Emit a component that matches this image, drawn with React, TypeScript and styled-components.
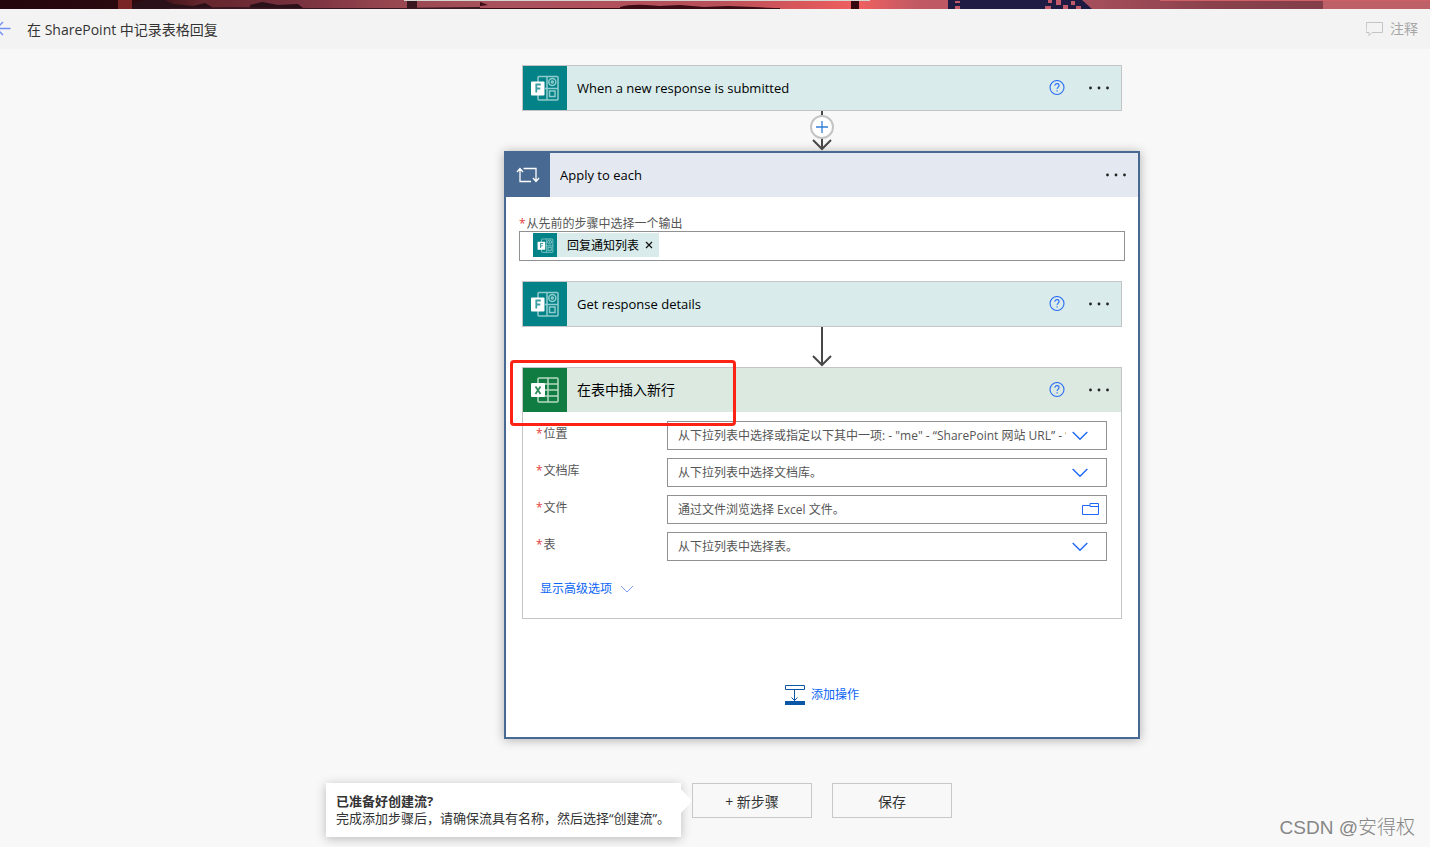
import React from "react";
import styled, { createGlobalStyle } from "styled-components";

const GlobalStyle = createGlobalStyle`
  * { box-sizing: border-box; }
  html, body { margin: 0; background: #f8f8f8; }
  body, button, input, select {
    font-family: "Open Sans", "Noto Sans CJK SC", sans-serif;
    font-size: 14px;
    color: #333;
  }
  button { margin: 0; padding: 0; border: 0; background: none; cursor: pointer; }
  svg { display: block; flex: none; }
`;

const Page = styled.div`
  position: relative;
  min-height: 100vh;
  overflow: hidden;
`;

const Banner = styled.svg`
  width: 100%;
  height: 9px;
`;

const TopBar = styled.header`
  display: flex;
  align-items: center;
  justify-content: space-between;
  height: 40px;
  padding-right: 12px;
  background: #f3f3f3;
`;

const TitleGroup = styled.div`
  display: flex;
  align-items: center;
  gap: 16px;
`;

const FlowTitle = styled.h1`
  margin: 0;
  padding-top: 2px;
  font-size: 14px;
  font-weight: 400;
  line-height: 20px;
`;

const CommentButton = styled.button`
  display: flex;
  align-items: center;
  gap: 7px;
  color: #a6a6a6;
  line-height: 20px;
`;

const Canvas = styled.main`
  display: flex;
  flex-direction: column;
  align-items: center;
  padding: 16px 0 24px 214px;
`;

const Card = styled.section`
  width: 600px;
  border: 1px solid #c4c4c4;
  background: #fff;
`;

const CardHeader = styled.div<{ $tint: string }>`
  display: flex;
  align-items: center;
  height: 44px;
  background: ${(p) => p.$tint};
`;

const IconTile = styled.div<{ $color: string; $small?: boolean }>`
  display: flex;
  align-items: center;
  justify-content: center;
  flex: none;
  width: ${(p) => (p.$small ? 24 : 44)}px;
  height: ${(p) => (p.$small ? 24 : 44)}px;
  background: ${(p) => p.$color};
`;

const CardTitle = styled.h2<{ $large?: boolean }>`
  flex: 1;
  margin: 0;
  padding-left: 10px;
  font-size: ${(p) => (p.$large ? 14 : 13)}px;
  font-weight: 400;
  line-height: 20px;
  color: #000;
`;

const HelpButton = styled.button`
  margin-right: 23px;
`;

const MoreButton = styled.button`
  margin-right: 11px;
`;

const Connector = styled.div`
  position: relative;
  display: flex;
  justify-content: center;
  height: 40px;
`;

const InsertButton = styled.button`
  position: absolute;
  top: 4px;
  left: 50%;
  display: flex;
  align-items: center;
  justify-content: center;
  width: 24px;
  height: 24px;
  margin-left: -12px;
  border: 2px solid #c4c4c4;
  border-radius: 50%;
  background: #fff;
`;

const Scope = styled.section`
  width: 636px;
  border: 2px solid #486991;
  background: #fff;
  box-shadow: 0 1px 10px rgba(0, 0, 0, 0.3);
`;

const ScopeBody = styled.div`
  display: flex;
  flex-direction: column;
  align-items: center;
  padding: 20px 13px 32px;
`;

const OutputField = styled.div`
  width: 100%;
  margin-bottom: 20px;
`;

const Label = styled.label`
  display: block;
  font-size: 12px;
  line-height: 14px;
  color: #555;

  &::before {
    content: "*";
    margin-right: 1px;
    color: #e03c3c;
  }
`;

const TokenBox = styled.div`
  display: flex;
  align-items: center;
  height: 30px;
  padding: 0 13px;
  border: 1px solid #919191;
`;

const Token = styled.span`
  display: flex;
  align-items: center;
  height: 24px;
  margin-bottom: 2px;
  background: #d9eceb;
  font-size: 12px;
  color: #000;
`;

const TokenText = styled.span`
  padding: 0 6px 0 10px;
`;

const TokenRemove = styled.button`
  padding-right: 6px;
`;

const TokenInput = styled.input`
  flex: 1;
  min-width: 0;
  border: 0;
  outline: 0;
  background: none;
  font-size: 12px;
`;

const InsertCard = styled(Card)`
  position: relative;
`;

const Highlight = styled.div`
  position: absolute;
  top: -8px;
  left: -13px;
  width: 226px;
  height: 66px;
  border: 3px solid #fc2314;
  border-radius: 4px;
  pointer-events: none;
`;

const FieldList = styled.div`
  display: flex;
  flex-direction: column;
  gap: 8px;
  padding: 9px 14px 0 13px;
`;

const FieldRow = styled.div`
  display: flex;
  align-items: flex-start;
`;

const FieldLabel = styled(Label)`
  width: 131px;
  padding-top: 6px;
`;

const Control = styled.div`
  position: relative;
  flex: 1;
`;

const Select = styled.select`
  display: block;
  width: 100%;
  height: 29px;
  padding: 0 40px 0 10px;
  border: 1px solid #919191;
  border-radius: 0;
  appearance: none;
  background: #fff;
  font-size: 12px;
  color: #555;
`;

const FileInput = styled.input`
  display: block;
  width: 100%;
  height: 29px;
  padding: 0 40px 0 10px;
  border: 1px solid #919191;
  background: #fff;
  font-size: 12px;

  &::placeholder { color: #555; opacity: 1; }
`;

const SelectArrow = styled.svg`
  position: absolute;
  top: 10px;
  right: 19px;
  pointer-events: none;
`;

const BrowseButton = styled.button`
  position: absolute;
  top: 8px;
  right: 8px;
`;

const AdvancedButton = styled.button`
  display: flex;
  align-items: center;
  gap: 8px;
  margin: 19px 0 20px 17px;
  font-size: 12px;
  line-height: 18px;
  color: #0a64f5;
`;

const AddAction = styled.button`
  display: flex;
  align-items: center;
  gap: 6px;
  margin-top: 65px;
  font-size: 12px;
  line-height: 21px;
  color: #0a64f5;
`;

const Footer = styled.div`
  position: relative;
  display: flex;
  gap: 20px;
  margin-top: 44px;
`;

const FooterButton = styled.button`
  width: 120px;
  height: 35px;
  border: 1px solid #c8c8c8;
  background: #f8f8f8;
`;

const Callout = styled.aside`
  position: absolute;
  top: 0;
  right: 100%;
  width: 355px;
  margin-right: 11px;
  padding: 10px;
  background: #fff;
  box-shadow: 0 2px 10px rgba(0, 0, 0, 0.25);
  font-size: 13px;
  line-height: 17px;
  white-space: nowrap;

  &::after {
    content: "";
    position: absolute;
    top: 6px;
    left: 100%;
    border: solid transparent;
    border-width: 12px 0 12px 11px;
    border-left-color: #fff;
  }
`;

const CalloutTitle = styled.strong`
  display: block;
`;

const Watermark = styled.div`
  position: absolute;
  right: 15px;
  bottom: 6px;
  font-family: "Liberation Sans", "Noto Sans CJK SC", sans-serif;
  font-size: 19px;
  font-weight: 300;
  line-height: 26px;
  color: #868686;
`;

function FormsIcon({ size = 30 }: { size?: number }) {
  return (
    <svg width={size} height={size} viewBox="0 0 30 30" fill="none">
      <g stroke="#8fcccd" strokeWidth="1.500">
        <rect x="8" y="3.500" width="20" height="23.500" rx="1" />
        <path d="M17 4v23M15 15.500h13" />
        <circle cx="22.300" cy="9" r="3.500" />
        <circle cx="22.300" cy="9" r="1" />
        <rect x="19.500" y="18" width="5.500" height="5.500" />
      </g>
      <rect x="1" y="8.500" width="13.500" height="14" rx="1" fill="#fff" />
      <path d="M6.300 19.500v-8h4.500M6.300 15.500h4" stroke="#3f9ea1" strokeWidth="1.800" />
    </svg>
  );
}

function ExcelIcon() {
  return (
    <svg width="30" height="30" viewBox="0 0 30 30" fill="none">
      <g stroke="#b5dcc4" strokeWidth="1.500">
        <rect x="8" y="3" width="20" height="24" rx="1" />
        <path d="M18 3v24M8 9h20M8 15h20M8 21h20" />
      </g>
      <rect x="1" y="8" width="14" height="14" rx="1" fill="#fff" />
      <path d="M5.500 11.500l5 7.500M10.500 11.500l-5 7.500" stroke="#2f8d59" strokeWidth="1.800" />
    </svg>
  );
}

function LoopIcon() {
  return (
    <svg width="24" height="18" viewBox="0 0 24 18" fill="none" stroke="#fff" strokeWidth="1.300">
      <path d="M15 15.500H4V3M1 6l3-3.500L7 6M7.500 2.500H20V15M17 12l3 3.500L23 12" />
    </svg>
  );
}

function HelpIcon() {
  return (
    <svg width="16" height="16" viewBox="0 0 16 16" fill="none" stroke="#2a6cf6" strokeWidth="1.100">
      <circle cx="8" cy="7.500" r="7" />
      <path d="M5.900 5.800c0-1.400.9-2.200 2.100-2.200s2.100.8 2.100 1.900c0 1.500-2 1.700-2 3.500M8.100 10.200v1.300" />
    </svg>
  );
}

function MoreIcon() {
  return (
    <svg width="22" height="16" viewBox="0 0 22 16" fill="#222">
      <circle cx="2.500" cy="8" r="1.400" />
      <circle cx="11" cy="8" r="1.400" />
      <circle cx="19.500" cy="8" r="1.400" />
    </svg>
  );
}

function ArrowDown() {
  return (
    <svg width="22" height="40" viewBox="0 0 22 40" fill="none" stroke="#484848" strokeWidth="2">
      <path d="M11 0v38M2 29l9 9 9-9" />
    </svg>
  );
}

interface StepHeaderProps {
  title: string;
  tint: string;
  color: string;
  icon: React.ReactNode;
  large?: boolean;
}

function StepHeader({ title, tint, color, icon, large }: StepHeaderProps) {
  return (
    <CardHeader $tint={tint}>
      <IconTile $color={color}>{icon}</IconTile>
      <CardTitle $large={large}>{title}</CardTitle>
      <HelpButton aria-label="帮助"><HelpIcon /></HelpButton>
      <MoreButton aria-label="更多"><MoreIcon /></MoreButton>
    </CardHeader>
  );
}

function SelectField({ id, label, prompt }: { id: string; label: string; prompt: string }) {
  return (
    <FieldRow>
      <FieldLabel htmlFor={id}>{label}</FieldLabel>
      <Control>
        <Select id={id} defaultValue="">
          <option value="">{prompt}</option>
        </Select>
        <SelectArrow width="16" height="10" viewBox="0 0 16 10" fill="none" stroke="#1f69f5" strokeWidth="1.400">
          <path d="M.7 1L8 8.300 15.300 1" />
        </SelectArrow>
      </Control>
    </FieldRow>
  );
}

export default function App() {
  return (
    <Page>
      <GlobalStyle />
      <Banner viewBox="0 0 1430 9" preserveAspectRatio="none" aria-hidden="true">
        <defs>
          <linearGradient id="sky" x1="0" x2="1">
            <stop offset="0" stopColor="#24060c" />
            <stop offset=".1" stopColor="#2c0a10" />
            <stop offset=".14" stopColor="#65262c" />
            <stop offset=".2" stopColor="#742f3c" />
            <stop offset=".27" stopColor="#96454f" />
            <stop offset=".35" stopColor="#a9525e" />
            <stop offset=".5" stopColor="#b8505a" />
            <stop offset=".56" stopColor="#d8565a" />
            <stop offset=".6" stopColor="#f06060" />
            <stop offset=".64" stopColor="#c25a64" />
            <stop offset=".72" stopColor="#b25562" />
            <stop offset=".85" stopColor="#8a414c" />
            <stop offset="1" stopColor="#7c3c46" />
          </linearGradient>
        </defs>
        <rect width="1430" height="9" fill="url(#sky)" />
        <path d="M118 0h14v9h-14z" fill="#7a2626" />
        <path d="M133 4l12-4h20l8 4 20 2 12-3 10 6h-82zM250 5l12-3 16 3 20-1 6 5h-54z" fill="#2a1018" />
        <path d="M170 8l60-1 80 1 80 0 90-1v2H170zM407 1h10v8h-10z" fill="#3a1620" />
        <path d="M480 2l8 3-8 1zM480 8h300v1H480zM620 7q10-3 26-2l14 1 20-1 24 2 24-1 26 1 20 1v1H620z" fill="#3b0c14" />
        <path d="M851 0h8v9h-8z" fill="#360810" />
        <path d="M948 0h134l10 9H948z" fill="#1f1b43" />
        <path d="M955 1h5v2h-5zM955 6h5v3h-5zM1048 0h4v3h-4zM1045 6h6v3h-6zM1056 0h5v5h-5zM1063 5h5v4h-5zM1071 1h4v4h-4zM1076 6h5v3h-5z" fill="#c25a6a" />
        <path d="M1323 0h107v9h-107z" fill="#bd6068" />
        <path d="M1160 0h270v1h-270z" fill="#cf6068" />
        <path d="M404 0h466v1H404z" fill="#d4d4d0" />
      </Banner>

      <TopBar>
        <TitleGroup>
          <svg width="11" height="16" viewBox="5 0 11 16" fill="none" stroke="#6f8ff5" strokeWidth="1.400" role="img" aria-label="返回">
            <path d="M15.500 7.500H1.500M8 1L1.500 7.500 8 14" />
          </svg>
          <FlowTitle>在 SharePoint 中记录表格回复</FlowTitle>
        </TitleGroup>
        <CommentButton>
          <svg width="17" height="16" viewBox="0 0 17 16" fill="none" stroke="#c4c4c4">
            <path d="M.5 1.500h16v10H6l-3 3v-3h-3z" />
          </svg>
          注释
        </CommentButton>
      </TopBar>

      <Canvas>
        <Card>
          <StepHeader title="When a new response is submitted" tint="#d9eceb" color="#038387" icon={<FormsIcon />} />
        </Card>
        <Connector>
          <ArrowDown />
          <InsertButton aria-label="插入新步骤">
            <svg width="14" height="14" viewBox="0 0 14 14" stroke="#2f7fd8" strokeWidth="1.300">
              <path d="M7 1v12M1 7h12" />
            </svg>
          </InsertButton>
        </Connector>

        <Scope>
          <CardHeader $tint="#e4e8f0">
            <IconTile $color="#486991"><LoopIcon /></IconTile>
            <CardTitle>Apply to each</CardTitle>
            <MoreButton aria-label="更多"><MoreIcon /></MoreButton>
          </CardHeader>
          <ScopeBody>
            <OutputField>
              <Label htmlFor="output">从先前的步骤中选择一个输出</Label>
              <TokenBox>
                <Token>
                  <IconTile $color="#038387" $small><FormsIcon size={17} /></IconTile>
                  <TokenText>回复通知列表</TokenText>
                  <TokenRemove aria-label="删除">
                    <svg width="8" height="8" viewBox="0 0 8 8" stroke="#111" strokeWidth="1.200">
                      <path d="M1 1l6 6M7 1L1 7" />
                    </svg>
                  </TokenRemove>
                </Token>
                <TokenInput id="output" />
              </TokenBox>
            </OutputField>

            <Card>
              <StepHeader title="Get response details" tint="#d9eceb" color="#038387" icon={<FormsIcon />} />
            </Card>
            <Connector><ArrowDown /></Connector>

            <InsertCard>
              <StepHeader large title="在表中插入新行" tint="#dbe9e1" color="#107c41" icon={<ExcelIcon />} />
              <FieldList>
                <SelectField
                  id="location"
                  label="位置"
                  prompt={'从下拉列表中选择或指定以下其中一项: - "me" - “SharePoint 网站 URL” - “users/UPN”'}
                />
                <SelectField id="library" label="文档库" prompt="从下拉列表中选择文档库。" />
                <FieldRow>
                  <FieldLabel htmlFor="file">文件</FieldLabel>
                  <Control>
                    <FileInput id="file" placeholder="通过文件浏览选择 Excel 文件。" />
                    <BrowseButton aria-label="浏览">
                      <svg width="17" height="13" viewBox="0 0 17 13" fill="none" stroke="#1f69f5">
                        <path d="M.5 2.500H8v-2h8.500v11H.5zM8 2.500v1h8.500" />
                      </svg>
                    </BrowseButton>
                  </Control>
                </FieldRow>
                <SelectField id="table" label="表" prompt="从下拉列表中选择表。" />
              </FieldList>
              <AdvancedButton>
                显示高级选项
                <svg width="14" height="8" viewBox="0 0 14 8" fill="none" stroke="#7d9cf0">
                  <path d="M1 1l6 6 6-6" />
                </svg>
              </AdvancedButton>
              <Highlight />
            </InsertCard>

            <AddAction>
              <svg width="20" height="20" viewBox="0 0 20 20" fill="none" stroke="#0a57a8">
                <path d="M.5.500h19v4H.5zM9.500 5v11M6.500 12.500l3 3 3-3" />
                <path d="M0 16h20v4H0z" fill="#0a57a8" stroke="none" />
              </svg>
              添加操作
            </AddAction>
          </ScopeBody>
        </Scope>

        <Footer>
          <Callout>
            <CalloutTitle>已准备好创建流?</CalloutTitle>
            完成添加步骤后，请确保流具有名称，然后选择“创建流”。
          </Callout>
          <FooterButton>+ 新步骤</FooterButton>
          <FooterButton>保存</FooterButton>
        </Footer>
      </Canvas>
      <Watermark>CSDN @安得权</Watermark>
    </Page>
  );
}
